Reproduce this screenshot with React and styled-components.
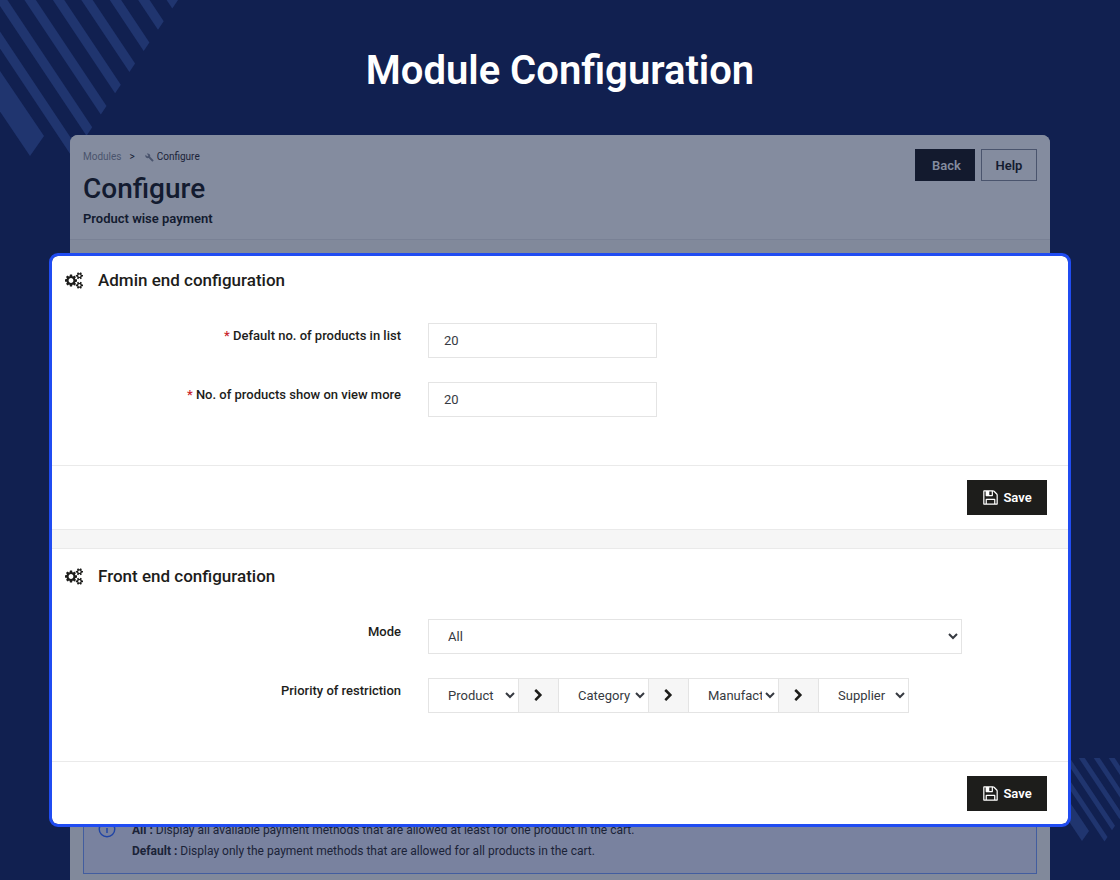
import React, { useState } from "react";
import styled, { createGlobalStyle } from "styled-components";
import { MdBuild } from "react-icons/md";

const GlobalStyle = createGlobalStyle`
  * {
    box-sizing: border-box;
  }

  body {
    margin: 0;
    background: #112050;
    color: #1d1d1b;
    font-family: Roboto, "Noto Sans", sans-serif;
    font-size: 13px;
  }
`;

const priorities = ["Product", "Category", "Manufacturer", "Supplier"];

function CogsIcon() {
  return (
    <svg width="18" height="17" viewBox="0 0 1920 1792" fill="currentColor" aria-hidden="true">
      <path d="M896 896q0-106-75-181t-181-75-181 75-75 181 75 181 181 75 181-75 75-181zm768 512q0-52-38-90t-90-38-90 38-38 90q0 53 37.5 90.5t90.5 37.5 90.5-37.5 37.5-90.5zm0-1024q0-52-38-90t-90-38-90 38-38 90q0 53 37.5 90.5t90.5 37.5 90.5-37.5 37.5-90.5zm-384 421v185q0 10-7 19.5t-16 10.5l-155 24q-11 35-32 76 34 48 90 115 7 11 7 20 0 12-7 19-23 30-82.500 89.500t-78.500 59.500q-11 0-21-7l-115-90q-37 19-77 31-11 108-23 155-7 24-30 24h-186q-11 0-20-7.500t-10-17.500l-23-153q-34-10-75-31l-118 89q-7 7-20 7-11 0-21-8-144-133-144-160 0-9 7-19 10-14 41-53t47-61q-23-44-35-82l-152-24q-10-1-17-9.500t-7-19.500v-185q0-10 7-19.500t16-10.500l155-24q11-35 32-76-34-48-90-115-7-11-7-20 0-12 7-20 22-30 82-89t79-59q11 0 21 7l115 90q34-18 77-32 11-108 23-154 7-24 30-24h186q11 0 20 7.500t10 17.500l23 153q34 10 75 31l118-89q8-7 20-7 11 0 21 8 144 133 144 160 0 8-7 19-12 16-42 54t-45 60q23 48 34 82l152 23q10 2 17 10.500t7 19.500zm640 533v140q0 16-149 31-12 27-30 52 51 113 51 138 0 4-4 7-122 71-124 71-8 0-46-47t-52-68q-20 2-30 2t-30-2q-14 21-52 68t-46 47q-2 0-124-71-4-3-4-7 0-25 51-138-18-25-30-52-149-15-149-31v-140q0-16 149-31 13-29 30-52-51-113-51-138 0-4 4-7 4-2 35-20t59-34 30-16q8 0 46 46.500t52 67.500q20-2 30-2t30 2q51-71 92-112l6-2q4 0 124 70 4 3 4 7 0 25-51 138 17 23 30 52 149 15 149 31zm0-1024v140q0 16-149 31-12 27-30 52 51 113 51 138 0 4-4 7-122 71-124 71-8 0-46-47t-52-68q-20 2-30 2t-30-2q-14 21-52 68t-46 47q-2 0-124-71-4-3-4-7 0-25 51-138-18-25-30-52-149-15-149-31v-140q0-16 149-31 13-29 30-52-51-113-51-138 0-4 4-7 4-2 35-20t59-34 30-16q8 0 46 46.500t52 67.500q20-2 30-2t30 2q51-71 92-112l6-2q4 0 124 70 4 3 4 7 0 25-51 138 17 23 30 52 149 15 149 31z" />
    </svg>
  );
}

function SaveIcon() {
  return (
    <svg width="17" height="17" viewBox="0 0 1792 1792" fill="currentColor" aria-hidden="true">
      <path d="M512 1536h768v-384h-768v384zm896 0h128v-896q0-14-10-38.500t-20-34.500l-281-281q-10-10-34-20t-39-10v416q0 40-28 68t-68 28h-576q-40 0-68-28t-28-68v-416h-128v1280h128v-416q0-40 28-68t68-28h832q40 0 68 28t28 68v416zm-384-928v-320q0-13-9.500-22.500t-22.500-9.500h-192q-13 0-22.500 9.500t-9.500 22.500v320q0 13 9.500 22.500t22.500 9.500h192q13 0 22.500-9.500t9.500-22.500zm640 32v928q0 40-28 68t-68 28h-1344q-40 0-68-28t-28-68v-1344q0-40 28-68t68-28h928q40 0 88 20t76 48l280 280q28 28 48 76t20 88z" />
    </svg>
  );
}

function ChevronIcon() {
  return (
    <svg width="13" height="13" viewBox="0 0 1792 1792" fill="currentColor" aria-hidden="true">
      <path d="M1363 877l-742 742q-19 19-45 19t-45-19l-166-166q-19-19-19-45t19-45l531-531-531-531q-19-19-19-45t19-45l166-166q19-19 45-19t45 19l742 742q19 19 19 45t-19 45z" />
    </svg>
  );
}

function InfoIcon() {
  return (
    <svg width="18" height="18" viewBox="0 0 18 18" fill="none" stroke="currentColor" strokeWidth="1.4" aria-hidden="true">
      <circle cx="9" cy="9" r="7.800" />
      <path d="M9 8v5M9 5v1.500" />
    </svg>
  );
}

function TopStripes() {
  return (
    <StripesTop width="180" height="160" viewBox="0 0 180 160" fill="#20356f" aria-hidden="true">
      {[0, 1, 2, 3, 4, 5, 6, 7].map((k) => {
        const x = 178 - 14.3 * k;
        const y = 21.2 * k;
        return (
          <path key={k} d={`M${x} ${y}l-5.700 8.500l-200 -300l5.700 -8.500z`} />
        );
      })}
      <path d="M44 136L30 156L-70 8L-56 -12z" />
    </StripesTop>
  );
}

function BottomStripes() {
  return (
    <StripesBottom width="80" height="84" viewBox="0 0 80 84" fill="#20356f" aria-hidden="true">
      {[0, 1, 2, 3, 4, 5, 6].map((k) => {
        const x = 67.5 + 7.5 * k;
        const y = 79 - 11.2 * k;
        return <path key={k} d={`M${x} ${y}l-3 4.500l-80 -120l3 -4.500z`} />;
      })}
      <path d="M49 73L42 83L-18 -7L-11 -17z" />
    </StripesBottom>
  );
}

function Panel({ title, children }) {
  return (
    <PanelStyled>
      <PanelHeading>
        <CogsIcon />
        {title}
      </PanelHeading>
      <PanelBody>{children}</PanelBody>
      <PanelFooter>
        <SaveButton type="submit">
          <SaveIcon />
          Save
        </SaveButton>
      </PanelFooter>
    </PanelStyled>
  );
}

function App() {
  const [listCount, setListCount] = useState("20");
  const [moreCount, setMoreCount] = useState("20");

  return (
    <Page>
      <GlobalStyle />
      <TopStripes />
      <BottomStripes />
      <Title>Module Configuration</Title>
      <Shell>
        <ShellHeader>
          <div>
            <Breadcrumb>
              <a href="#modules">Modules</a>
              <span>&gt;</span>
              <a className="current" href="#configure">
                <MdBuild size={9} />
                Configure
              </a>
            </Breadcrumb>
            <h2>Configure</h2>
            <h3>Product wise payment</h3>
          </div>
          <Actions>
            <BackButton type="button">Back</BackButton>
            <HeaderButton type="button">Help</HeaderButton>
          </Actions>
        </ShellHeader>

        <Spotlight>
          <Panel title="Admin end configuration">
            <Row>
              <Label htmlFor="list-count">
                <Required>*</Required> Default no. of products in list
              </Label>
              <TextInput
                id="list-count"
                value={listCount}
                onChange={(e) => setListCount(e.target.value)}
              />
            </Row>
            <Row>
              <Label htmlFor="more-count">
                <Required>*</Required> No. of products show on view more
              </Label>
              <TextInput
                id="more-count"
                value={moreCount}
                onChange={(e) => setMoreCount(e.target.value)}
              />
            </Row>
          </Panel>
          <Divider />
          <Panel title="Front end configuration">
            <Row>
              <Label htmlFor="mode">Mode</Label>
              <Select id="mode" defaultValue="All">
                <option>All</option>
                <option>Default</option>
              </Select>
            </Row>
            <Row>
              <Label htmlFor="priority-0">Priority of restriction</Label>
              <Group>
                {priorities.map((item, i) => (
                  <React.Fragment key={item}>
                    {i > 0 && (
                      <Addon>
                        <ChevronIcon />
                      </Addon>
                    )}
                    <Select
                      $small
                      id={`priority-${i}`}
                      aria-label={`Priority ${i + 1}`}
                      defaultValue={item}
                    >
                      {priorities.map((name) => (
                        <option key={name}>{name}</option>
                      ))}
                    </Select>
                  </React.Fragment>
                ))}
              </Group>
            </Row>
          </Panel>
        </Spotlight>

        <Info>
          <InfoIcon />
          <div>
            <p>
              <b>All :</b> Display all available payment methods that are
              allowed at least for one product in the cart.
            </p>
            <p>
              <b>Default :</b> Display only the payment methods that are allowed
              for all products in the cart.
            </p>
          </div>
        </Info>
      </Shell>
    </Page>
  );
}

const Page = styled.main`
  position: relative;
  display: flex;
  flex-direction: column;
  min-height: 100vh;
  padding: 0 70px;
  overflow: hidden;
`;

const StripesTop = styled.svg`
  position: absolute;
  top: 0;
  left: 0;
`;

const StripesBottom = styled.svg`
  position: absolute;
  right: 0;
  bottom: 38px;
`;

const Title = styled.h1`
  margin: 0;
  padding: 47px 0 40px;
  color: #ffffff;
  font-size: 40px;
  font-weight: 600;
  line-height: 48px;
  text-align: center;
`;

const Shell = styled.section`
  position: relative;
  flex: 1;
  padding-bottom: 6px;
  background: #81899b;
  border-radius: 8px 8px 0 0;
`;

const ShellHeader = styled.header`
  display: flex;
  justify-content: space-between;
  height: 105px;
  padding: 14px 13px;
  background: #848c9f;
  border-bottom: 1px solid #798195;
  border-radius: 8px 8px 0 0;
  color: #131b30;

  h2 {
    margin: 0;
    font-size: 28px;
    font-weight: 500;
    line-height: 36px;
  }

  h3 {
    margin: 3px 0 0;
    font-size: 13px;
    font-weight: 600;
    line-height: 18px;
  }
`;

const Breadcrumb = styled.nav`
  display: flex;
  gap: 8px;
  font-size: 10px;
  line-height: 16px;
  margin-bottom: 6px;

  a {
    color: #4a546d;
    text-decoration: none;
  }

  .current {
    display: flex;
    align-items: center;
    gap: 3px;
    margin-left: 2px;
    color: #1b2338;
  }

  svg {
    color: #4a546d;
  }
`;

const Actions = styled.div`
  display: flex;
  gap: 6px;
`;

const HeaderButton = styled.button`
  width: 56px;
  height: 32px;
  padding: 0;
  border: 1px solid #4a546d;
  background: transparent;
  color: #131b30;
  font: inherit;
  font-weight: 600;
  cursor: pointer;
`;

const BackButton = styled(HeaderButton)`
  width: 60px;
  padding-left: 3px;
  border-color: #131b30;
  background: #131a2e;
  color: #848c9f;
`;

const Spotlight = styled.form`
  position: relative;
  z-index: 1;
  margin: 13px -21px 0;
  overflow: hidden;
  background: #ffffff;
  background-clip: padding-box;
  border: 3px solid #204cf2;
  border-radius: 9px;
`;

const PanelHeading = styled.h2`
  display: flex;
  align-items: center;
  gap: 15px;
  height: 48px;
  margin: 0;
  padding: 0 13px;
  font-size: 17px;
  font-weight: 500;
`;

const PanelBody = styled.div`
  display: grid;
  gap: 24px;
  padding: 19px 106px 48px 0;
`;

const PanelFooter = styled.div`
  display: flex;
  justify-content: flex-end;
  padding: 14px 21px;
  border-top: 1px solid #eaeaea;
`;

const PanelStyled = styled.section`
  &:last-child ${PanelFooter} {
    padding-bottom: 13px;
  }
`;

const Divider = styled.div`
  height: 20px;
  margin-bottom: 3px;
  background: #f6f6f6;
  border: solid #eaeaea;
  border-width: 1px 0;
`;

const Row = styled.div`
  display: grid;
  grid-template-columns: 349px 1fr;
  gap: 27px;
`;

const Label = styled.label`
  font-weight: 500;
  line-height: 25px;
  text-align: right;
`;

const Required = styled.span`
  color: #c9252d;
`;

const TextInput = styled.input`
  width: 229px;
  height: 35px;
  padding: 0 15px;
  border: 1px solid #e4e4e4;
  background: #ffffff;
  color: #363a41;
  font: inherit;
`;

const Select = styled.select`
  width: ${({ $small }) => ($small ? "91px" : "100%")};
  height: 35px;
  padding: 0 0 0 15px;
  border: 1px solid #e4e4e4;
  border-radius: 0;
  background: #ffffff;
  color: #363a41;
  font: inherit;
`;

const Group = styled.div`
  display: flex;

  > * + * {
    margin-left: -1px;
  }
`;

const Addon = styled.span`
  display: flex;
  align-items: center;
  justify-content: center;
  width: 41px;
  height: 35px;
  border: 1px solid #e4e4e4;
  background: #f6f6f6;
`;

const SaveButton = styled.button`
  display: flex;
  align-items: center;
  justify-content: center;
  gap: 4px;
  width: 80px;
  height: 35px;
  padding: 0;
  border: 0;
  background: #1d1d1b;
  color: #ffffff;
  font: inherit;
  font-weight: 600;
  cursor: pointer;
`;

const Info = styled.div`
  display: flex;
  gap: 16px;
  margin: -26px 13px 0;
  padding: 18px 14px 11px;
  border: 1px solid #425d9f;
  background: #79829f;
  color: #1b2338;
  font-size: 12px;
  line-height: 21px;

  p {
    margin: 0;
  }

  svg {
    flex: none;
    color: #1f44a5;
  }
`;

export default App;
